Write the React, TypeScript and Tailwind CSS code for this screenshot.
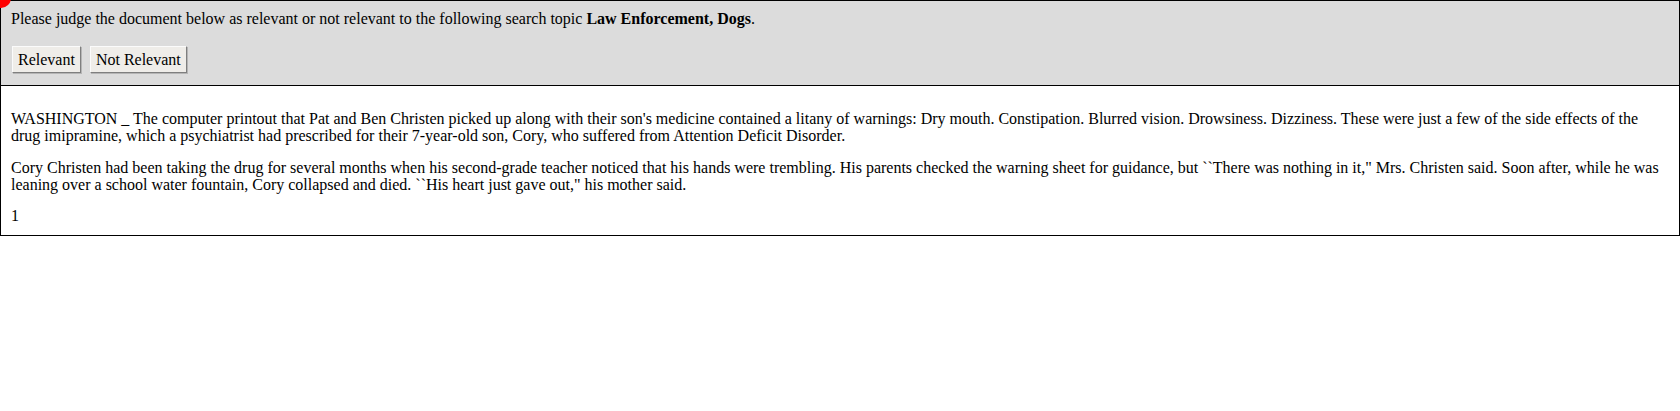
import React from "react";

export default function App() {
  const btn =
    "bg-[#efede9] text-black text-[16px] leading-[19px] px-[5px] py-[3px] border border-t-[#fbfbfb] border-l-[#fbfbfb] border-r-[#7f7f7f] border-b-[#7f7f7f] shadow-[1px_1px_0_#b5b5b5]";
  return (
    <div
      className="relative w-[1680px] bg-white text-black text-[16px]"
      style={{ fontFamily: '"Liberation Serif", "Times New Roman", serif' }}
    >
      <div className="bg-[#dcdcdc] border border-black px-[10px] pt-[9px] pb-[12px]">
        <div className="leading-[18px]">
          Please judge the document below as relevant or not relevant to the following search topic{" "}
          <b>Law Enforcement, Dogs</b>.
        </div>
        <div className="flex gap-[9px] mt-[18px] ml-[1px]">
          <button className={btn}>Relevant</button>
          <button className={btn}>Not Relevant</button>
        </div>
      </div>
      <div className="border-x border-b border-black px-[10px] pt-[24px] pb-[11px] leading-[17px]">
        <p>
          WASHINGTON _ The computer printout that Pat and Ben Christen picked up along with their son's medicine
          contained a litany of warnings: Dry mouth. Constipation. Blurred vision. Drowsiness. Dizziness. These were
          just a few of the side effects of the drug imipramine, which a psychiatrist had prescribed for their
          7-year-old son, Cory, who suffered from Attention Deficit Disorder.
        </p>
        <p className="mt-[15px]">
          Cory Christen had been taking the drug for several months when his second-grade teacher noticed that his
          hands were trembling. His parents checked the warning sheet for guidance, but ``There was nothing in it,"
          Mrs. Christen said. Soon after, while he was leaning over a school water fountain, Cory collapsed and died.
          ``His heart just gave out," his mother said.
        </p>
        <p className="mt-[14px]">1</p>
      </div>
      <div className="absolute left-[-9px] top-[-12px] w-[20px] h-[20px] rounded-full bg-[#ff0000] z-10" />
    </div>
  );
}
